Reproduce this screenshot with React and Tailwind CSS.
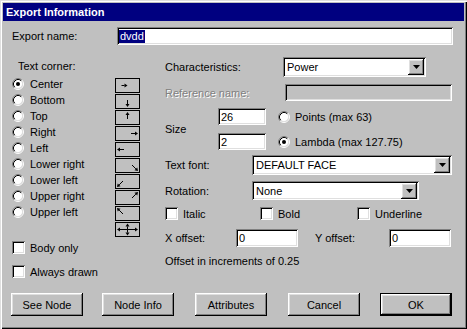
import React from "react";

const field =
  "bg-white shadow-[inset_1px_1px_0_#808080,inset_-1px_-1px_0_#ffffff,inset_2px_2px_0_#000000,inset_-2px_-2px_0_#dfdfdf]";
const fieldGray =
  "bg-[#c0c0c0] shadow-[inset_1px_1px_0_#808080,inset_-1px_-1px_0_#ffffff,inset_2px_2px_0_#000000,inset_-2px_-2px_0_#dfdfdf]";
const raised =
  "bg-[#c0c0c0] shadow-[inset_-1px_-1px_0_#000000,inset_1px_1px_0_#ffffff,inset_-2px_-2px_0_#808080,inset_2px_2px_0_#dfdfdf]";

function Radio({ checked }) {
  return (
    <svg width="12" height="12" viewBox="0 0 12 12" className="shrink-0">
      <circle cx="6" cy="6" r="4.5" fill="#ffffff" />
      <path d="M2.11 9.89A5.5 5.5 0 0 1 9.89 2.11" stroke="#808080" fill="none" />
      <path d="M9.89 2.11A5.5 5.5 0 0 1 2.11 9.89" stroke="#ffffff" fill="none" />
      <path d="M2.82 9.18A4.5 4.5 0 0 1 9.18 2.82" stroke="#000000" fill="none" />
      <path d="M9.18 2.82A4.5 4.5 0 0 1 2.82 9.18" stroke="#dfdfdf" fill="none" />
      {checked && <circle cx="6" cy="6" r="2" fill="#000000" />}
    </svg>
  );
}

function Check() {
  return <div className={field + " w-[13px] h-[13px] shrink-0"} />;
}

function DropBtn() {
  return (
    <div className={raised + " w-[16px] h-[16px] shrink-0 flex items-center justify-center mr-[2px]"}>
      <svg width="7" height="4" viewBox="0 0 7 4">
        <polygon points="0,0 7,0 3.5,4" fill="#000" />
      </svg>
    </div>
  );
}

function Select({ w, h, value }) {
  return (
    <div className={field + " flex items-center justify-between"} style={{ width: w, height: h }}>
      <span className="pl-[4px]">{value}</span>
      <DropBtn />
    </div>
  );
}

function Arrow({ x1, y1, x2, y2 }) {
  const dx = x2 - x1;
  const dy = y2 - y1;
  const len = Math.sqrt(dx * dx + dy * dy);
  const ux = dx / len;
  const uy = dy / len;
  const px = -uy;
  const py = ux;
  const bx = x2 - ux * 3;
  const by = y2 - uy * 3;
  const pts = `${x2},${y2} ${bx + px * 2},${by + py * 2} ${bx - px * 2},${by - py * 2}`;
  return (
    <g>
      <line x1={x1} y1={y1} x2={bx} y2={by} stroke="#000" strokeWidth="1" />
      <polygon points={pts} fill="#000" />
    </g>
  );
}

const arrowSets = [
  [[6.5, 7.5, 12.5, 7.5]],
  [[12.5, 6, 12.5, 13]],
  [[12.5, 9, 12.5, 2]],
  [[16, 7.5, 23, 7.5]],
  [[9, 7.5, 2, 7.5]],
  [[17, 7, 23, 13]],
  [[8, 7, 2, 13]],
  [[17, 8, 23, 2]],
  [[8, 8, 2, 2]],
  [
    [12.5, 7.5, 2, 7.5],
    [12.5, 7.5, 23, 7.5],
    [12.5, 7.5, 12.5, 1.5],
    [12.5, 7.5, 12.5, 13.5],
  ],
];

function ArrowBox({ arrows }) {
  return (
    <svg width="25" height="15" viewBox="0 0 25 15" className="block">
      <rect x="0.5" y="0.5" width="24" height="14" fill="none" stroke="#000" />
      {arrows.map((a, i) => (
        <Arrow key={i} x1={a[0]} y1={a[1]} x2={a[2]} y2={a[3]} />
      ))}
    </svg>
  );
}

function Button({ label, def, cls }) {
  if (def) {
    return (
      <div className={"w-[72px] h-[23px] border border-black " + cls}>
        <div className={raised + " w-full h-full flex items-center justify-center"}>{label}</div>
      </div>
    );
  }
  return (
    <div className={raised + " w-[72px] h-[23px] flex items-center justify-center " + cls}>{label}</div>
  );
}

const corners = [
  ["Center", true],
  ["Bottom", false],
  ["Top", false],
  ["Right", false],
  ["Left", false],
  ["Lower right", false],
  ["Lower left", false],
  ["Upper right", false],
  ["Upper left", false],
];

export default function App() {
  return (
    <div className="w-[467px] h-[329px] bg-[#c0c0c0] p-[3px] text-[11px] text-black [font-family:'Liberation_Sans',Arial,sans-serif] leading-[14px] shadow-[inset_1px_1px_0_#dfdfdf,inset_2px_2px_0_#ffffff,inset_-1px_-1px_0_#000000,inset_-2px_-2px_0_#808080] overflow-hidden">
      <div className="h-[18px] bg-[#000080] text-white font-bold flex items-center pl-[3px] text-[11px]">
        Export Information
      </div>

      <div className="flex items-center mt-[6px] h-[18px]">
        <div className="ml-[9px] w-[105px]">Export name:</div>
        <div className={field + " w-[336px] h-[18px] flex items-center pl-[2px]"}>
          <span className="bg-[#000080] text-white px-[1px] leading-[13px]">dvdd</span>
        </div>
      </div>

      <div className="flex h-[235px]">
        {/* left column */}
        <div className="ml-[9px] w-[132px] flex flex-col">
          <div className="mt-[14px] ml-[6px] h-[14px]">Text corner:</div>
          <div className="flex mt-[3px]">
            <div className="w-[103px] flex flex-col">
              {corners.map(([label, checked]) => (
                <div key={label} className="h-[16px] flex items-center gap-[6px]">
                  <Radio checked={checked} />
                  <span>{label}</span>
                </div>
              ))}
            </div>
            <div className="mt-[2px] flex flex-col gap-[1px]">
              {arrowSets.map((a, i) => (
                <ArrowBox key={i} arrows={a} />
              ))}
            </div>
          </div>
          <div className="mt-[4px] h-[13px] flex items-center gap-[5px]">
            <Check />
            <span>Body only</span>
          </div>
          <div className="mt-[11px] h-[13px] flex items-center gap-[5px]">
            <Check />
            <span>Always drawn</span>
          </div>
        </div>

        {/* right column */}
        <div className="ml-[21px] flex flex-col">
          <div className="mt-[12px] h-[20px] flex items-center">
            <div className="w-[118px]">Characteristics:</div>
            <Select w={143} h={20} value="Power" />
          </div>
          <div className="mt-[7px] h-[17px] flex items-center">
            <div className="w-[120px] text-[#808080] [text-shadow:1px_1px_0_#ffffff]">Reference name:</div>
            <div className={fieldGray + " w-[167px] h-[17px]"} />
          </div>
          <div className="mt-[7px] flex items-center">
            <div className="w-[53px]">Size</div>
            <div className="flex flex-col gap-[8px]">
              <div className={field + " w-[48px] h-[17px] flex items-center pl-[3px]"}>26</div>
              <div className={field + " w-[48px] h-[17px] flex items-center pl-[3px]"}>2</div>
            </div>
            <div className="ml-[12px] flex flex-col gap-[8px]">
              <div className="h-[17px] flex items-center gap-[5px]">
                <Radio checked={false} />
                <span>Points (max 63)</span>
              </div>
              <div className="h-[17px] flex items-center gap-[5px]">
                <Radio checked={true} />
                <span>Lambda (max 127.75)</span>
              </div>
            </div>
          </div>
          <div className="mt-[5px] h-[20px] flex items-center">
            <div className="w-[87px]">Text font:</div>
            <Select w={200} h={20} value="DEFAULT FACE" />
          </div>
          <div className="mt-[6px] h-[19px] flex items-center">
            <div className="w-[87px]">Rotation:</div>
            <Select w={167} h={19} value="None" />
          </div>
          <div className="mt-[7px] h-[13px] flex items-center">
            <div className="w-[95px] flex items-center gap-[5px]">
              <Check />
              <span>Italic</span>
            </div>
            <div className="w-[97px] flex items-center gap-[5px]">
              <Check />
              <span>Bold</span>
            </div>
            <div className="flex items-center gap-[5px]">
              <Check />
              <span>Underline</span>
            </div>
          </div>
          <div className="mt-[9px] h-[18px] flex items-center">
            <div className="w-[71px]">X offset:</div>
            <div className={field + " w-[62px] h-[18px] flex items-center pl-[3px]"}>0</div>
            <div className="ml-[17px] w-[74px]">Y offset:</div>
            <div className={field + " w-[62px] h-[18px] flex items-center pl-[3px]"}>0</div>
          </div>
          <div className="mt-[7px] h-[14px]">Offset in increments of 0.25</div>
        </div>
      </div>

      <div className="flex mt-[13px]">
        <Button label="See Node" cls="ml-[8px]" />
        <Button label="Node Info" cls="ml-[19px]" />
        <Button label="Attributes" cls="ml-[21px]" />
        <Button label="Cancel" cls="ml-[21px]" />
        <Button label="OK" def cls="ml-[20px]" />
      </div>
    </div>
  );
}
